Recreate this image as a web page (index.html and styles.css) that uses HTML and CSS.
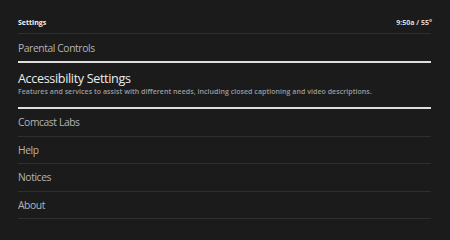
FILE: index.html
```html
<!DOCTYPE html>
<html>
<head>
<meta charset="utf-8">
<link rel="stylesheet" href="styles.css">
</head>
<body>
<div class="screen">
  <header class="topbar">
    <span class="title">Settings</span>
    <span class="status">9:50a / 55°</span>
  </header>
  <ul class="menu">
    <li class="item before-selected">Parental Controls</li>
    <li class="item selected">
      <div class="sel-title">Accessibility Settings</div>
      <div class="sel-desc">Features and services to assist with different needs, including closed captioning and video descriptions.</div>
    </li>
    <li class="item">Comcast Labs</li>
    <li class="item">Help</li>
    <li class="item">Notices</li>
    <li class="item">About</li>
  </ul>
</div>
</body>
</html>
```

FILE: styles.css
```css
html, body {
  margin: 0;
  padding: 0;
  background: #1b1b1b;
}
body {
  width: 450px;
  height: 239px;
  overflow: hidden;
  font-family: "Open Sans", "Noto Sans", sans-serif;
}
.screen {
  padding: 0 19px 0 18px;
}
.topbar {
  height: 34px;
  box-sizing: border-box;
  padding-top: 17px;
  display: flex;
  justify-content: space-between;
  align-items: flex-start;
  border-bottom: 1px solid #2f2f2f;
  font-size: 7px;
  line-height: 12px;
  font-weight: 700;
}
.title {
  color: #f2f2f2;
}
.status {
  color: #dcdcdc;
  margin-right: -1px;
}
.menu {
  list-style: none;
  margin: 0;
  padding: 0;
}
.item {
  height: 27.5px;
  box-sizing: border-box;
  border-bottom: 1px solid #2f2f2f;
  display: flex;
  align-items: center;
  color: #b4b4b4;
  font-size: 10.3px;
  letter-spacing: -0.4px;
}
.item.before-selected {
  height: 27px;
  border-bottom: none;
}
.item.selected {
  height: 48px;
  display: block;
  border-top: 2px solid #dedede;
  border-bottom: 2px solid #dedede;
  padding-top: 8px;
}
.sel-title {
  color: #ececec;
  font-size: 12.6px;
  line-height: 16px;
  letter-spacing: -0.35px;
}
.sel-desc {
  color: #9c9c9c;
  font-size: 7px;
  line-height: 10px;
  font-weight: 600;
  letter-spacing: 0.05px;
}
```
